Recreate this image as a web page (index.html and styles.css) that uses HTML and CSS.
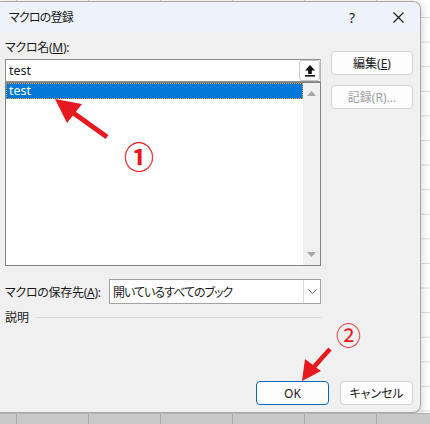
FILE: index.html
```html
<!DOCTYPE html>
<html lang="ja">
<head>
<meta charset="utf-8">
<title>マクロの登録</title>
<link rel="stylesheet" href="styles.css">
</head>
<body>
<div class="screen">
  <div class="dialog">
    <div class="titlebar">
      <span class="title">マクロの登録</span>
      <span class="help">?</span>
      <span class="close"><svg width="11" height="11" viewBox="0 0 11 11"><path d="M0.5 0.5L10.5 10.5M10.5 0.5L0.5 10.5" stroke="#1a1a1a" stroke-width="1.1" fill="none"/></svg></span>
    </div>
    <div class="body">
      <div class="top">
        <div class="left">
          <div class="label">マクロ名(<u>M</u>):</div>
          <div class="input">
            <span class="input-text">test</span>
            <span class="collapse"><svg width="12" height="13" viewBox="0 0 12 13"><path d="M6 1L1 6.5H4.2V10H7.8V6.5H11Z" fill="#111"/><rect x="1" y="11" width="10" height="1.6" fill="#111"/></svg></span>
          </div>
          <div class="list">
            <div class="items">
              <div class="item selected">test</div>
            </div>
            <div class="scrollbar">
              <svg width="9" height="5" viewBox="0 0 9 5"><path d="M4.5 0L9 5H0Z" fill="#a6a6a6"/></svg>
              <svg width="9" height="5" viewBox="0 0 9 5"><path d="M0 0H9L4.5 5Z" fill="#a6a6a6"/></svg>
            </div>
          </div>
        </div>
        <div class="right">
          <button class="btn">編集(<u>E</u>)</button>
          <button class="btn disabled">記録(R)...</button>
        </div>
      </div>
      <div class="save-row">
        <span class="save-label">マクロの保存先(<u>A</u>):</span>
        <div class="combo">
          <span class="combo-text">開いているすべてのブック</span>
          <span class="combo-btn"><svg width="9" height="5" viewBox="0 0 9 5"><path d="M0.5 0.5L4.5 4.5L8.5 0.5" stroke="#555" stroke-width="1" fill="none"/></svg></span>
        </div>
      </div>
      <div class="desc"><span>説明</span><span class="rule"></span></div>
      <div class="footer">
        <button class="btn primary">OK</button>
        <button class="btn">キャンセル</button>
      </div>
    </div>
  </div>
  <div class="band"></div>
  <svg class="annot" width="430" height="424" viewBox="0 0 430 424">
    <line x1="107" y1="137" x2="72" y2="112" stroke="#e5191f" stroke-width="5"/>
    <polygon points="55,99 82,104 67,123" fill="#e5191f"/>
    <line x1="330" y1="349" x2="313" y2="368" stroke="#e5191f" stroke-width="4.5"/>
    <polygon points="302,381 305,359 321,371" fill="#e5191f"/>
  </svg>
  <span class="num n1">①</span>
  <span class="num n2">②</span>
</div>
</body>
</html>
```

FILE: styles.css
```css
* { box-sizing: border-box; }

body {
  margin: 0;
  font-family: "Noto Sans", "Noto Sans CJK JP", sans-serif;
  font-size: 12px;
  color: #1a1a1a;
  font-feature-settings: "palt";
}

.screen {
  position: relative;
  width: 430px;
  height: 424px;
  overflow: hidden;
  background-color: #fff;
  background-image:
    linear-gradient(90deg, #d6d6d6 1px, transparent 1px),
    linear-gradient(#dcdcdc 1px, transparent 1px);
  background-size: 72px 100%, 100% 24.6px;
  background-position: 16px 0, 0 17px;
}

.dialog {
  width: 421px;
  height: 412px;
  margin-top: 1px;
  background: #f0f0f0;
  border: 1px solid #a8a8a8;
  border-left: none;
  border-radius: 0 8px 8px 0;
  display: flex;
  flex-direction: column;
  overflow: hidden;
  box-shadow: 0 2px 8px rgba(0, 0, 0, 0.22);
}

.titlebar {
  height: 30px;
  flex: none;
  background: #eef2f9;
  display: flex;
  align-items: center;
  padding-left: 9px;
  padding-right: 12px;
}

.title {
  font-size: 12px;
  letter-spacing: -0.8px;
}

.help {
  margin-left: auto;
  width: 20px;
  text-align: center;
  font-size: 14px;
}

.close {
  margin-left: 26px;
  width: 20px;
  display: flex;
  justify-content: center;
  align-items: center;
}

.body {
  flex: 1;
  display: flex;
  flex-direction: column;
  padding: 0 7px 7px 5px;
}

.top {
  display: flex;
  gap: 10px;
}

.left {
  width: 316px;
  padding-top: 8px;
}

.label {
  height: 16px;
  line-height: 16px;
  letter-spacing: -0.3px;
}

.input {
  margin-top: 3px;
  height: 23px;
  border: 1px solid #8e8e8e;
  border-right-color: #b4b4b4;
  background: #fff;
  display: flex;
  align-items: center;
  padding-left: 3px;
}

.input-text { font-size: 12.5px; }

.collapse {
  margin-left: auto;
  width: 21px;
  height: 21px;
  border: 1px solid #c9c9c9;
  border-radius: 3px;
  background: #fff;
  display: flex;
  align-items: center;
  justify-content: center;
}

.list {
  height: 184px;
  border: 1px solid #828282;
  background: #fff;
  display: flex;
}

.items {
  flex: 1;
}

.item {
  height: 16px;
  line-height: 14px;
  padding-left: 2px;
  font-size: 12.5px;
}

.selected {
  background: #0078d7;
  color: #fff;
  border: 1px dotted #f59a3c;
}

.scrollbar {
  width: 17px;
  background: #f0f0f0;
  display: flex;
  flex-direction: column;
  justify-content: space-between;
  align-items: center;
  padding: 8px 0 8px;
}

.right {
  width: 82px;
  padding-top: 19px;
  display: flex;
  flex-direction: column;
  gap: 10px;
}

.btn {
  height: 24px;
  border: 1px solid #d0d0d0;
  border-radius: 4px;
  background: #fdfdfd;
  font-family: inherit;
  font-size: 12px;
  color: #1a1a1a;
  padding: 0;
  font-feature-settings: "palt";
}

.disabled { color: #a0a0a0; }

.save-row {
  margin-top: 13px;
  height: 25px;
  display: flex;
  align-items: center;
}

.save-label {
  width: 104px;
  letter-spacing: -0.3px;
}

.combo {
  width: 212px;
  height: 25px;
  border: 1px solid #a3a3a3;
  background: #fff;
  display: flex;
  align-items: center;
  padding-left: 3px;
}

.combo-text { letter-spacing: -1px; }

.combo-btn {
  margin-left: auto;
  width: 17px;
  height: 100%;
  border-left: 1px solid #dadada;
  display: flex;
  align-items: center;
  justify-content: center;
}

.desc {
  margin-top: 5px;
  height: 16px;
  display: flex;
  align-items: center;
}

.rule {
  flex: 1;
  height: 1px;
  background: #d9d9d9;
  margin-left: 7px;
  margin-right: 92px;
}

.footer {
  margin-top: auto;
  display: flex;
  justify-content: flex-end;
  gap: 11px;
}

.footer .btn { width: 73px; }

.primary {
  border-color: #0067c0;
}

.band {
  height: 11px;
  background-color: #c9c9c9;
  background-image: linear-gradient(90deg, #a9a9a9 1px, transparent 1px);
  background-size: 72px 100%;
  background-position: 16px 0;
  border-top: 1px solid #b0b0b0;
}

.annot {
  position: absolute;
  left: 0;
  top: 0;
  pointer-events: none;
}

.num {
  position: absolute;
  color: #e5191f;
  font-family: "Noto Sans CJK JP", sans-serif;
  line-height: 1;
}

.n1 {
  left: 124px;
  top: 140px;
  font-size: 30px;
  font-weight: 700;
}

.n2 {
  left: 336px;
  top: 322px;
  font-size: 25px;
}
```
